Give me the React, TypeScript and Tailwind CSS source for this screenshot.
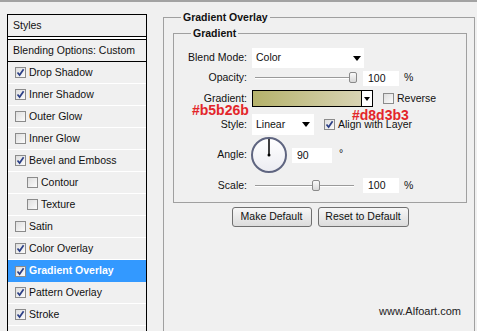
import React from "react";

type Item = { label: string; checked?: boolean; sub?: boolean; active?: boolean };

const items: Item[] = [
  { label: "Drop Shadow", checked: true },
  { label: "Inner Shadow", checked: true },
  { label: "Outer Glow" },
  { label: "Inner Glow" },
  { label: "Bevel and Emboss", checked: true },
  { label: "Contour", sub: true },
  { label: "Texture", sub: true },
  { label: "Satin" },
  { label: "Color Overlay", checked: true },
  { label: "Gradient Overlay", checked: true, active: true },
  { label: "Pattern Overlay", checked: true },
  { label: "Stroke", checked: true },
];

function Check({ checked }: { checked?: boolean }) {
  return (
    <span className="w-[11px] h-[11px] shrink-0 border border-[#8b8b8b] bg-gradient-to-br from-[#dedede] to-[#fbfbfb] flex items-center justify-center">
      {checked && (
        <svg width="9" height="9" viewBox="0 0 9 9">
          <path d="M1.5 4.5 L3.6 7 L7.6 1.2" fill="none" stroke="#2b3f86" strokeWidth="1.7" />
        </svg>
      )}
    </span>
  );
}

function Arrow() {
  return (
    <svg width="8" height="5" viewBox="0 0 8 5">
      <path d="M0 0 H8 L4 5 Z" fill="#000" />
    </svg>
  );
}

function Slider({ at }: { at: number }) {
  return (
    <div className="relative w-[99px] h-[14px] ml-[8px]">
      <div className="absolute left-0 right-0 top-[6px] h-[2px] border-t border-[#9a9a9a] border-b border-b-white" />
      <div
        className="absolute top-[1px] w-[8px] h-[11px] rounded-[2px] border border-[#8a8a8a] bg-gradient-to-b from-[#fafafa] to-[#d8d8d8]"
        style={{ left: at }}
      />
    </div>
  );
}

function Label({ children }: { children: React.ReactNode }) {
  return <span className="w-[73px] shrink-0 text-right text-[#111]">{children}</span>;
}

function NumBox({ value, w }: { value: string; w: string }) {
  return <div className={`${w} h-[15px] bg-white pl-[5px] leading-[15px] text-[#111]`}>{value}</div>;
}

export default function App() {
  return (
    <div className="w-[477px] h-[331px] overflow-hidden bg-[#f0f0f0] border-t-2 border-[#a3a3a3] flex font-['Liberation_Sans',Arial,sans-serif] text-[10.5px] text-[#111]">
      {/* Styles list */}
      <div className="ml-[7px] mt-[12px] w-[140px] border border-black border-b-0 bg-[#f0f0f0]">
        <div className="h-[22px] flex items-center pl-[5px] border-b border-black">Styles</div>
        <div className="h-[2px] bg-white" />
        <div className="h-[23px] flex items-center pl-[5px] border-y border-black">Blending Options: Custom</div>
        {items.map((it) => (
          <div
            key={it.label}
            className={
              it.active
                ? "h-[22px] flex items-center gap-[3px] pl-[7px] bg-[#3399ff] text-white font-bold"
                : `h-[22px] flex items-center gap-[3px] border-b border-white ${it.sub ? "pl-[19px]" : "pl-[7px]"}`
            }
          >
            <Check checked={it.checked} />
            <span>{it.label}</span>
          </div>
        ))}
      </div>

      {/* Settings */}
      <div className="relative ml-[16px] mt-[9px] w-[312px]">
        <fieldset className="border border-[#a0a0a0] pl-[9px] pr-[7px] h-[340px]">
          <legend className="ml-[8px] px-[2px] font-bold leading-[12px]">Gradient Overlay</legend>
          <fieldset className="mt-[4px] border border-[#a0a0a0] pb-[9px]">
            <legend className="ml-[17px] px-[2px] font-bold leading-[12px]">Gradient</legend>

            <div className="mt-[9px] h-[20px] flex items-center">
              <Label>Blend Mode:</Label>
              <div className="ml-[5px] w-[112px] h-[20px] bg-white flex items-center justify-between pl-[4px] pr-[3px]">
                <span>Color</span>
                <Arrow />
              </div>
            </div>

            <div className="mt-[2px] h-[16px] flex items-center">
              <Label>Opacity:</Label>
              <Slider at={94} />
              <div className="ml-[9px]">
                <NumBox value="100" w="w-[36px]" />
              </div>
              <span className="ml-[5px]">%</span>
            </div>

            <div className="mt-[4px] h-[17px] flex items-center">
              <Label>Gradient:</Label>
              <div className="ml-[5px] w-[121px] h-[17px] border border-black flex">
                <div className="flex-1 bg-gradient-to-r from-[#b5b26b] to-[#d8d3b3]" />
                <div className="w-[11px] border-l border-black bg-white flex items-center justify-center">
                  <svg width="6" height="4" viewBox="0 0 6 4">
                    <path d="M0 0 H6 L3 4 Z" fill="#000" />
                  </svg>
                </div>
              </div>
              <div className="ml-[10px]">
                <Check />
              </div>
              <span className="ml-[3px]">Reverse</span>
            </div>

            <div className="mt-[7px] h-[21px] flex items-center">
              <Label>Style:</Label>
              <div className="ml-[5px] w-[62px] h-[21px] bg-white flex items-center justify-between pl-[4px] pr-[4px]">
                <span>Linear</span>
                <Arrow />
              </div>
              <div className="ml-[10px]">
                <Check checked />
              </div>
              <span className="ml-[3px]">Align with Layer</span>
            </div>

            <div className="mt-[2px] h-[36px] flex items-center">
              <Label>Angle:</Label>
              <div className="ml-[4px] w-[36px] h-[36px] rounded-full border-2 border-[#5f6580] bg-gradient-to-b from-[#ffffff] to-[#ececf2] flex justify-center">
                <svg width="32" height="32" viewBox="0 0 32 32">
                  <line x1="16" y1="0" x2="16" y2="16" stroke="#000" strokeWidth="1.5" />
                  <circle cx="16" cy="16" r="1.5" fill="#000" />
                </svg>
              </div>
              <div className="ml-[5px]">
                <NumBox value="90" w="w-[40px]" />
              </div>
              <span className="ml-[7px] self-start mt-[11px] leading-[10px]">°</span>
            </div>

            <div className="mt-[5px] h-[15px] flex items-center">
              <Label>Scale:</Label>
              <Slider at={57} />
              <div className="ml-[9px]">
                <NumBox value="100" w="w-[36px]" />
              </div>
              <span className="ml-[5px]">%</span>
            </div>
          </fieldset>

          <div className="mt-[4px] flex justify-center gap-[6px]">
            <button className="w-[80px] h-[20px] rounded-[3px] border border-[#707070] bg-gradient-to-b from-[#f7f7f7] to-[#dcdcdc] text-[#111]">
              Make Default
            </button>
            <button className="w-[91px] h-[20px] rounded-[3px] border border-[#707070] bg-gradient-to-b from-[#f7f7f7] to-[#dcdcdc] text-[#111]">
              Reset to Default
            </button>
          </div>

          <div className="mt-[78px] pr-[6px] text-right text-[11px] leading-[12px] text-[#222] font-medium">
            www.Alfoart.com
          </div>
        </fieldset>

        {/* colour annotations */}
        <span className="absolute left-[29px] top-[91px] text-[14px] leading-[16px] font-bold text-[#e3262a]">#b5b26b</span>
        <span className="absolute left-[189px] top-[96px] text-[14px] leading-[16px] font-bold text-[#e3262a]">#d8d3b3</span>
      </div>
    </div>
  );
}
